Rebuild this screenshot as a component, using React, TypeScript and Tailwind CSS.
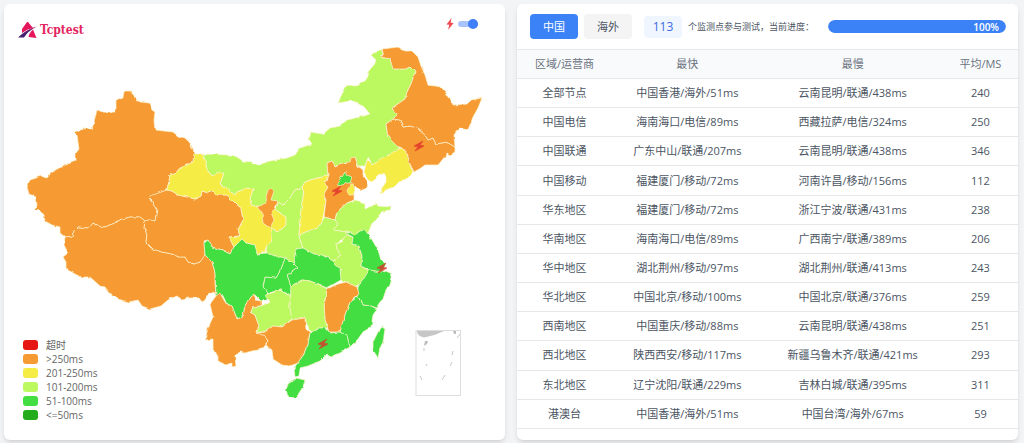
const ORANGE = '#f69a33';
const YELLOW = '#f5ec45';
const LIME = '#bcf85f';
const GREEN = '#43df42';

const provinces = [
  { name: '新疆', fill: ORANGE, points: '125,91 132,91 132,94 136,99 140,102 149,103 152,110 155,112 154,120 155,130 173,132 178,136 185,138 190,143 195,153 193,162 185,166 178,169 175,174 170,175 167,190 157,194 150,196 151,200 153,204 157,210 155,221 149,220 145,221 140,217 130,217 120,220 115,223 105,227 97,226 93,223 89,228 78,227 74,231 72,236 65,237 60,233 60,227 52,225 45,221 44,215 40,210 34,209 37,206 36,197 29,194 27,187 30,180 36,178 40,176 47,178 51,173 60,168 68,164 76,161 76,153 79,149 77,135 74,132 87,128 92,129 97,110 104,112 110,113 116,111 116,100 123,97 124,92' },
  { name: '西藏', fill: ORANGE, points: '65,237 72,236 74,231 78,227 89,228 93,223 97,226 105,227 115,223 120,220 130,217 140,217 145,221 144,227 147,235 146,242 150,247 153,249 162,252 172,254 179,257 185,257 188,262 194,264 200,262 203,255 205,255 212,262 215,272 215,283 216,296 214,292 208,295 205,300 202,302 199,298 190,298 181,299 177,296 168,300 161,306 150,309 142,306 138,300 129,302 118,299 110,293 105,287 100,286 90,277 85,277 82,278 75,274 66,269 66,262 63,257 68,253 64,245' },
  { name: '青海', fill: ORANGE, points: '167,190 172,191 178,195 187,197 195,199 201,196 202,191 208,193 213,191 217,195 227,195 235,203 241,208 243,220 238,230 240,236 229,237 234,247 230,254 222,250 212,247 208,240 204,241 205,255 200,262 194,264 188,262 185,257 179,257 172,254 162,252 153,249 146,242 147,235 144,227 145,221 149,220 155,221 157,210 153,204 150,196' },
  { name: '内蒙古', fill: LIME, points: '202,154 230,155 237,157 243,161 251,162 258,165 270,161 287,158 295,155 300,148 312,144 308,140 310,132 323,134 330,128 340,126 347,120 360,117 370,114 365,108 359,103 350,101 338,103 342,94 347,85 357,86 366,80 368,72 377,61 371,55 378,50 383,50 381,57 390,59 393,69 405,69 410,67 415,72 411,84 408,90 405,99 392,108 397,115 393,119 386,124 388,137 398,145 400,150 388,155 372,165 368,158 365,166 358,166 355,157 350,162 342,163 335,166 332,161 327,163 328,176 317,178 305,182 302,187 295,190 290,198 283,205 278,202 270,204 258,207 251,205 250,198 253,190 248,188 237,192 235,195 220,184 224,173 212,176 207,170 205,160' },
  { name: '甘肃', fill: YELLOW, points: '202,154 194,154 193,162 185,166 178,169 175,174 170,175 167,190 172,191 178,195 187,197 195,199 201,196 202,191 208,193 213,191 217,195 227,195 235,203 241,208 243,220 238,230 240,236 229,237 234,247 242,239 246,243 255,245 257,254 265,252 267,245 271,240 271,228 277,231 282,229 286,225 286,217 276,210 270,204 258,207 251,205 250,198 253,190 248,188 237,192 235,195 220,184 224,173 220,172 212,176 207,170 205,160' },
  { name: '陕西', fill: LIME, points: '302,187 304,193 301,210 299,234 300,240 303,248 295,249 296,257 293,263 285,258 276,256 266,253 267,245 271,240 271,228 277,231 282,229 286,225 286,217 276,210 278,202 283,205 290,198 295,190' },
  { name: '宁夏', fill: ORANGE, points: '271,188 274,191 271,200 278,201 275,209 271,212 274,220 270,228 263,223 262,213 257,207 267,203 266,197 268,190' },
  { name: '山西', fill: YELLOW, points: '328,176 325,184 328,187 324,194 326,200 323,217 322,223 315,229 308,231 299,235 301,210 304,193 302,187 305,182 317,178' },
  { name: '河北', fill: ORANGE, points: '355,157 358,166 363,170 363,175 368,182 367,188 360,191 355,186 354,193 354,200 347,203 337,212 335,220 324,217 326,200 324,194 328,187 325,184 328,176 327,163 332,161 335,166 342,163 350,162 351,158' },
  { name: '北京', fill: GREEN, points: '345,172 347,175 352,177 350,183 346,183 343,186 337,185 339,180 342,177' },
  { name: '天津', fill: YELLOW, points: '350,184 353,184 355,190 353,195 349,195 347,191' },
  { name: '辽宁', fill: YELLOW, points: '398,149 402,148 408,155 409,162 413,172 406,179 400,181 394,187 388,189 380,194 382,188 386,182 386,176 383,173 378,175 372,182 368,180 364,172 367,160 372,165 380,159 388,155' },
  { name: '吉林', fill: ORANGE, points: '386,124 393,119 400,120 403,127 410,126 417,128 425,135 428,140 433,138 436,144 447,142 455,147 455,152 450,155 447,153 443,159 438,165 425,165 421,168 414,172 409,162 408,155 402,148 397,146 388,137' },
  { name: '黑龙江', fill: ORANGE, points: '382,49 398,47 405,51 412,51 418,57 421,66 425,75 428,85 441,87 447,94 451,100 453,105 467,104 471,100 482,98 478,108 473,117 468,130 459,128 454,135 455,147 447,142 436,144 433,138 428,140 425,135 417,128 410,126 403,127 400,120 393,119 397,115 392,108 405,99 408,90 411,84 415,72 410,67 405,69 393,69 390,59 381,57 383,52' },
  { name: '山东', fill: LIME, points: '335,220 337,212 347,203 356,200 365,203 365,209 371,207 376,203 378,206 390,207 389,211 381,213 375,220 371,226 368,233 360,231 355,235 347,232 333,230 338,224' },
  { name: '河南', fill: LIME, points: '324,217 335,220 338,224 333,230 347,232 350,235 336,243 337,249 341,255 333,261 322,255 314,254 303,248 300,240 299,235 308,231 315,229 322,223' },
  { name: '安徽', fill: LIME, points: '347,235 353,237 352,244 359,246 362,256 361,266 369,271 363,280 357,287 346,282 341,280 340,269 333,261 341,255 337,249 336,243 342,242' },
  { name: '江苏', fill: GREEN, points: '345,233 350,233 355,235 360,231 365,230 371,238 378,250 381,260 386,264 382,272 369,270 361,266 362,256 359,246 352,244 353,237' },
  { name: '浙江', fill: GREEN, points: '369,270 382,272 386,271 392,274 389,285 386,290 383,299 377,308 371,306 363,305 358,297 358,287 363,280' },
  { name: '福建', fill: GREEN, points: '358,297 363,305 371,306 377,309 373,315 371,327 363,332 358,339 350,347 347,336 340,332 344,317 350,302' },
  { name: '江西', fill: ORANGE, points: '346,282 357,287 359,294 350,302 344,317 340,332 329,332 325,320 324,305 327,289 338,284' },
  { name: '湖北', fill: GREEN, points: '295,249 303,248 314,254 322,255 333,261 340,269 341,280 327,288 320,285 310,281 302,280 291,286 287,275 298,268 293,263 296,257' },
  { name: '重庆', fill: GREEN, points: '285,258 293,263 298,268 287,275 291,286 291,297 286,293 280,290 268,293 263,287 265,277 276,278 281,269' },
  { name: '四川', fill: GREEN, points: '205,255 204,243 208,240 212,247 222,250 230,254 234,247 242,239 246,243 255,245 257,254 266,253 276,256 285,258 281,269 276,278 265,277 263,287 268,293 267,300 261,301 255,295 250,297 245,306 243,317 237,319 232,306 226,302 222,294 216,297 215,272 212,262' },
  { name: '云南', fill: ORANGE, points: '216,296 220,293 225,302 232,306 237,319 243,317 245,306 250,297 254,294 256,300 261,301 261,306 252,307 250,312 255,315 259,326 257,332 265,336 268,341 265,346 258,350 252,351 245,353 240,352 235,355 236,366 232,367 232,363 226,365 218,361 218,357 213,347 213,339 205,340 208,328 213,317 210,304' },
  { name: '贵州', fill: LIME, points: '261,306 270,302 266,295 280,290 291,297 290,307 292,319 282,327 273,326 265,332 257,332 259,326 255,315 250,312 252,307' },
  { name: '湖南', fill: LIME, points: '291,286 302,280 310,281 320,285 327,289 324,305 325,320 328,328 319,328 310,333 305,318 292,321 290,307' },
  { name: '广西', fill: ORANGE, points: '292,320 305,318 306,329 310,333 308,345 302,357 298,363 290,366 282,365 273,359 272,350 266,345 268,341 265,336 257,333 265,332 273,326 282,327' },
  { name: '广东', fill: GREEN, points: '310,333 319,328 326,328 330,333 340,332 347,336 350,347 340,353 331,357 327,354 320,361 308,366 300,368 299,376 295,377 294,368 302,357 308,345' },
  { name: '海南', fill: GREEN, points: '296,378 305,380 303,387 299,393 294,398 288,396 286,390 288,384' },
  { name: '台湾', fill: GREEN, points: '382,327 385,329 383,342 380,348 378,358 373,350 373,342 378,332' },
];

const hotspots = [
  [419, 146],
  [337, 191],
  [382, 268],
  [323, 344],
];

const legend = [
  { label: '超时', color: 'bg-[#e61614]' },
  { label: '>250ms', color: 'bg-[#f69a33]' },
  { label: '201-250ms', color: 'bg-[#f5ec45]' },
  { label: '101-200ms', color: 'bg-[#bcf85f]' },
  { label: '51-100ms', color: 'bg-[#43df42]' },
  { label: '<=50ms', color: 'bg-[#22ac1c]' },
];

const rows = [
  ['全部节点', '中国香港/海外/51ms', '云南昆明/联通/438ms', '240'],
  ['中国电信', '海南海口/电信/89ms', '西藏拉萨/电信/324ms', '250'],
  ['中国联通', '广东中山/联通/207ms', '云南昆明/联通/438ms', '346'],
  ['中国移动', '福建厦门/移动/72ms', '河南许昌/移动/156ms', '112'],
  ['华东地区', '福建厦门/移动/72ms', '浙江宁波/联通/431ms', '238'],
  ['华南地区', '海南海口/电信/89ms', '广西南宁/联通/389ms', '206'],
  ['华中地区', '湖北荆州/移动/97ms', '湖北荆州/联通/413ms', '243'],
  ['华北地区', '中国北京/移动/100ms', '中国北京/联通/376ms', '259'],
  ['西南地区', '中国重庆/移动/88ms', '云南昆明/联通/438ms', '251'],
  ['西北地区', '陕西西安/移动/117ms', '新疆乌鲁木齐/联通/421ms', '293'],
  ['东北地区', '辽宁沈阳/联通/229ms', '吉林白城/联通/395ms', '311'],
  ['港澳台', '中国香港/海外/51ms', '中国台湾/海外/67ms', '59'],
];

function Logo() {
  return (
    <div className="flex items-center gap-[3px]">
      <svg className="h-4 w-[19px]" viewBox="0 0 19 16" aria-hidden="true">
        <path d="M9 0 L10 0 L15 6 Q9 7 4 11 L4 7 Z" fill="#e5175c" />
        <path d="M18 5 Q9 7 0 15.500 L6 15.500 Q10 9 18 5 Z" fill="#44206f" />
        <path d="M19 4.500 Q12 6 6 11.500 Q11 7.500 19 4.500 Z" fill="#e5175c" />
        <path d="M15 7.500 L18.500 16 L10.500 15 Q11 11 15 7.500 Z" fill="#e5175c" />
      </svg>
      <span className="font-['DejaVu_Serif_Condensed','DejaVu_Serif',serif] text-xs font-bold text-[#e2265f]">
        Tcptest
      </span>
    </div>
  );
}

function ChinaMap() {
  return (
    <svg className="block w-full" viewBox="4 44 501 360" role="img" aria-label="中国">
      {/* roughens the straight polygon edges into coast and border lines */}
      <filter id="rough" x="0" y="0" width="100%" height="100%" colorInterpolationFilters="sRGB">
        <feTurbulence type="fractalNoise" baseFrequency="0.15" numOctaves="2" seed="4" />
        <feDisplacementMap in="SourceGraphic" scale="3" xChannelSelector="R" yChannelSelector="G" />
      </filter>
      <g stroke="#fdf3cf" strokeWidth="0.7" strokeLinejoin="round" filter="url(#rough)">
        {provinces.map((p) => (
          <polygon key={p.name} points={p.points} fill={p.fill} />
        ))}
      </g>
      <circle cx="327" cy="357" r="2" fill="none" stroke="#d9f7c4" strokeWidth="0.7" />
      {hotspots.map(([x, y]) => (
        <path
          key={x}
          d="M4 -5 L-5 0 L-1 1 L-4 5 L5 0 L1 -1 Z"
          transform={`translate(${x} ${y})`}
          fill="#e0302c"
          stroke="#e0302c"
          strokeWidth="0.7"
          opacity="0.8"
        />
      ))}
      {/* South China Sea inset */}
      <rect x="416" y="330.500" width="44.500" height="65" fill="none" stroke="#dedede" />
      <path d="M417 331 H444 Q434 336 424 337.500 Q417 336 417 331 Z" fill="#c6c6c6" />
      <path d="M453 331 h3 v3 l-2 0 z M425 341 l3 0 l-1 3 l-3 2 z" fill="#bdbdbd" />
      <path
        d="M460 334 l-3 4 M453 351 l-1 4 M452 362 l-2 4 M445 375 l-3 5 M420 376 l2 4 M426 364 l1 2 M424 348 l0 3"
        stroke="#c9c9c9"
        fill="none"
      />
    </svg>
  );
}

function MapCard() {
  return (
    <section className="relative min-w-0 rounded-md bg-white shadow-md">
      <div className="flex h-10 items-start justify-between pt-[18px] pr-[27px] pl-[14px]">
        <Logo />
        <label className="-mt-1 flex items-center gap-1">
          <svg className="h-3 w-2" viewBox="0 0 8 12" role="img" aria-label="闪电">
            <path d="M5.500 0 L0.500 6.500 L3.300 6.800 L2 12 L7.600 5 L4.700 4.700 Z" fill="#ee4a50" />
          </svg>
          <input
            type="checkbox"
            role="switch"
            defaultChecked
            className="relative h-1.5 w-5 appearance-none rounded-full bg-[#a8c4fa] before:absolute before:-top-0.5 before:left-0 before:size-2.5 before:rounded-full before:bg-[#3f7ff8] checked:before:left-2.5"
          />
        </label>
      </div>
      <ChinaMap />
      <ul className="absolute bottom-[18px] left-[19px] text-[10px] text-[#666666]">
        {legend.map((item) => (
          <li key={item.label} className="flex h-[14px] items-center gap-2">
            <span className={`h-2.5 w-[15px] rounded-[3px] ${item.color}`} />
            {item.label}
          </li>
        ))}
      </ul>
    </section>
  );
}

function ResultCard() {
  const progress = 100;

  return (
    <section className="min-w-0 overflow-hidden rounded-md bg-white pb-[11px] shadow-md">
      <div className="flex h-[45px] items-center pr-3 pl-[13px]">
        <button type="button" className="h-[25px] w-12 rounded-sm bg-[#3b82f6] text-white">
          中国
        </button>
        <button type="button" className="ml-1.5 h-[25px] w-12 rounded-sm bg-[#f4f4f5] text-[#4b5563]">
          海外
        </button>
        <span className="ml-3 flex h-[22px] w-[38px] items-center justify-center rounded-sm bg-[#eff6ff] text-xs text-[#4169e1]">
          113
        </span>
        <span className="ml-1.5 text-[9px] whitespace-nowrap text-[#4b5563]">个监测点参与测试，当前进度：</span>
        <div
          role="progressbar"
          aria-valuenow={progress}
          aria-label="当前进度"
          className="ml-[14px] h-[13px] flex-1 overflow-hidden rounded-full bg-[#e5e7eb]"
        >
          <div
            className="flex h-full items-center justify-end rounded-full bg-[#3b82f6] pr-[7px] text-[10px] font-semibold text-white"
            style={{ width: `${progress}%` }}
          >
            {progress}%
          </div>
        </div>
      </div>

      <table className="h-[380px] w-full table-fixed border-collapse text-center text-[#4b5563]">
        <thead>
          <tr className="h-[29px] border-y border-[#e5e7eb] bg-[#f8fafc] text-[#6b7280]">
            <th scope="col" className="w-[19%] font-normal">区域/运营商</th>
            <th scope="col" className="w-[30%] font-normal">最快</th>
            <th scope="col" className="w-[36%] font-normal">最慢</th>
            <th scope="col" className="w-[15%] font-normal">平均/MS</th>
          </tr>
        </thead>
        <tbody>
          {rows.map(([area, fastest, slowest, average]) => (
            <tr key={area} className="h-[29px] border-b border-[#e5e7eb]">
              <td>{area}</td>
              <td>{fastest}</td>
              <td>{slowest}</td>
              <td>{average}</td>
            </tr>
          ))}
        </tbody>
      </table>
    </section>
  );
}

export default function App() {
  return (
    <main className="grid min-h-screen grid-cols-2 items-start gap-3 bg-[#f3f4f6] pt-1 pr-1.5 pb-[3px] pl-1 font-['Open_Sans','Noto_Sans_CJK_SC',sans-serif] text-[11px] leading-4 *:h-full">
      <MapCard />
      <ResultCard />
    </main>
  );
}
